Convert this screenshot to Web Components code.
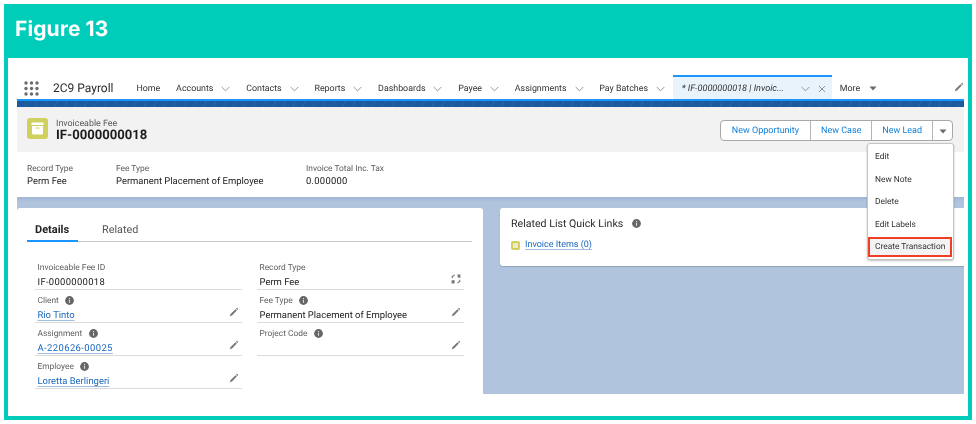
<!DOCTYPE html>
<html lang="en"><head><meta charset="utf-8"><title>Figure 13</title>
<style>
html,body{margin:0;background:#fff}
body{font-family:Roboto,"Liberation Sans",Arial,sans-serif;color:#1c1c1c;width:976px;height:424px;overflow:hidden;text-rendering:geometricPrecision}
</style></head><body>
<fig-frame title-text="Figure 13">
  <sf-nav>
    <nav-item>Home</nav-item>
    <nav-item menu>Accounts</nav-item>
    <nav-item menu>Contacts</nav-item>
    <nav-item menu>Reports</nav-item>
    <nav-item menu>Dashboards</nav-item>
    <nav-item menu>Payee</nav-item>
    <nav-item menu>Assignments</nav-item>
    <nav-item menu>Pay Batches</nav-item>
    <nav-tab>* IF-0000000018 | Invoic...</nav-tab>
    <nav-item caret>More</nav-item>
  </sf-nav>
  <record-header></record-header>
  <record-highlights>
    <hl-item style="width:89px" label="Record Type">Perm Fee</hl-item>
    <hl-item style="width:190px" label="Fee Type">Permanent Placement of Employee</hl-item>
    <hl-item style="--ls:.25px" label="Invoice Total Inc. Tax">0.000000</hl-item>
  </record-highlights>
  <record-body>
    <details-card slot="left">
      <rec-field slot="a" style="--ls:.32px" label="Invoiceable Fee ID">IF-0000000018</rec-field>
      <rec-field slot="a" label="Client" info edit link>Rio Tinto</rec-field>
      <rec-field slot="a" style="--ls:.4px" label="Assignment" info edit link>A-220626-00025</rec-field>
      <rec-field slot="a" label="Employee" info edit link>Loretta Berlingeri</rec-field>
      <rec-field slot="b" label="Record Type" swap>Perm Fee</rec-field>
      <rec-field slot="b" label="Fee Type" info edit>Permanent Placement of Employee</rec-field>
      <rec-field slot="b" label="Project Code" info edit></rec-field>
    </details-card>
    <quick-links slot="right"></quick-links>
  </record-body>
  <action-menu></action-menu>
</fig-frame>
<script>
const ICONS={
 chev:'<svg width="9" height="6" viewBox="0 0 9 6"><path d="M.7 1l3.8 3.8L8.3 1" fill="none" stroke="#7a7a7a" stroke-width=".8"/></svg>',
 caret:'<svg width="8" height="5" viewBox="0 0 8 5"><path d="M.5.4h7L4 4.6z" fill="#6b6b6b"/></svg>',
 close:'<svg width="8" height="8" viewBox="0 0 8 8"><path d="M1 1l6 6M7 1L1 7" stroke="#7a7a7a" stroke-width=".8"/></svg>',
 pencil:'<svg width="10" height="10" viewBox="0 0 10 10"><path d="M8 .8l1.3 1.3-1 1L7 1.8zM6.5 2.3l1.3 1.3-4.8 4.8-2.2.8.8-2.1z" fill="#777"/></svg>',
 info:'<svg width="9" height="9" viewBox="0 0 9 9"><circle cx="4.5" cy="4.5" r="4.4" fill="#666"/><path d="M4.5 2.1v.9M4.5 3.8v3" stroke="#ddd" stroke-width="1.1"/></svg>',
 swap:'<svg width="10" height="10" viewBox="0 0 10 10"><path d="M6.2.6h3.2v3.2H7zM.6 6.2h3.2L3.4 9.4H.6z" fill="#777"/><path d="M1.2 4.2V2.6L3.6 1M8.8 5.8v1.6L6.4 9" fill="none" stroke="#777" stroke-width="1.1"/></svg>',
 box:'<svg width="13" height="13" viewBox="0 0 13 13"><path d="M.4 1.4q0-.9.9-.9h10.4q.9 0 .9.9v1.6H.4z" fill="#fff"/><path d="M1 4h11v7.4q0 1-1 1H2q-1 0-1-1z" fill="#fff"/><rect x="4.4" y="5.4" width="4.2" height="1.2" rx=".5" fill="#cfd05d"/></svg>',
 grid:'<svg width="15" height="15" viewBox="0 0 15 15" fill="#6b6b6b">'+[2,7.5,13].flatMap(y=>[2,7.5,13].map(x=>`<circle cx="${x}" cy="${y}" r="1.7"/>`)).join('')+'</svg>'
};
function def(name,css,html){
  customElements.define(name,class extends HTMLElement{
    constructor(){super();const r=this.attachShadow({mode:'open'});
      r.innerHTML=`<style>${css}</style>`+(typeof html==='function'?html(this):html);}
  });
}
def('fig-frame',`
 :host{display:block;position:relative;margin:4px;height:416px;background:#00ccba;box-sizing:border-box;padding:0 4px 4px;filter:blur(.4px)}
 .t{height:54px;box-sizing:border-box;padding-top:13px;padding-left:7px;color:#fff;font:700 21px/26px Inter,"Open Sans",sans-serif;letter-spacing:.1px}
 .w{background:#fff;height:358px;box-sizing:border-box;padding:17px 4px 22px 9px;display:flex;flex-direction:column}
`,h=>`<div class="t">${h.getAttribute('title-text')}</div><div class="w"><slot></slot></div>`);

def('sf-nav',`
 :host{display:block;height:32px;flex:none;position:relative}
 .r{display:flex;align-items:stretch;height:24px;padding-left:7px;background:#fff;box-sizing:border-box}
 .g{display:flex;align-items:center;width:15px;margin-right:14px;padding-top:2px}
 .n{font-size:12px;width:83.5px;flex:none;color:#2b2b2b;display:flex;align-items:center;padding-top:1px}
 .i{display:flex;flex:1}
 .p{display:flex;align-items:center;margin-left:auto}
 .s{height:8px;border-top:2px solid #1b96ff;box-sizing:border-box;background:
   repeating-linear-gradient(115deg,rgba(255,255,255,.05) 0 1px,transparent 1px 9px),#1c5a9d}
`,`<div class="r"><span class="g">${ICONS.grid}</span><span class="n">2C9 Payroll</span><div class="i"><slot></slot></div><span class="p">${ICONS.pencil}</span></div><div class="s"></div>`);

def('nav-item',`
 :host{display:flex;align-items:center;font-size:8.85px;color:#333;padding-top:3px;margin-right:15.8px}
 svg{margin-left:8px}
 :host([caret]) svg{margin-left:9px}
`,h=>`<slot></slot>${h.hasAttribute('menu')?ICONS.chev:h.hasAttribute('caret')?ICONS.caret:''}`);

def('nav-tab',`
 :host{display:flex;align-items:center;width:159px;flex:none;box-sizing:border-box;margin:0 8px 0 -8px;padding:2px 6px 0 9px;background:#e8f3fc;border-top:2px solid #1b96ff;font-size:9.1px;font-style:italic;color:#333;white-space:nowrap}
 .a{margin-left:auto;display:flex;align-items:center;gap:8px;font-style:normal}
`,`<slot></slot><span class="a">${ICONS.chev}${ICONS.close}</span>`);

def('record-header',`
 :host{display:flex;align-items:flex-start;height:45px;flex:none;background:#f2f2f2;box-sizing:border-box;padding:11px 11px 0 10px;position:relative}
 .ic{width:21px;height:21px;border-radius:3px;background:#cfd05d;display:flex;align-items:center;justify-content:center;flex:none;margin-right:8px}
 .tx{padding-top:1px}
 .o{font-size:8.9px;line-height:10px;color:#585858}
 .v{font-size:13.1px;line-height:13px;font-weight:700;color:#1c1c1c}
 .b{margin-left:auto;margin-top:2px;display:flex;height:21px;width:233.5px;border:1px solid #a8a8a8;border-radius:4px;background:#fff;box-sizing:border-box}
 .b span{display:flex;align-items:center;justify-content:center;box-sizing:border-box;color:#0f7fd8;font-size:9px;border-left:1px solid #b5b5b5;padding-top:1px}
 .b span:first-child{border:0}
`,`<span class="ic">${ICONS.box}</span><div class="tx"><div class="o">Invoiceable Fee</div><div class="v">IF-0000000018</div></div>
<div class="b"><span style="width:90px">New Opportunity</span><span style="width:61px">New Case</span><span style="width:61px">New Lead</span><span style="width:20px">${ICONS.caret}</span></div>`);

def('record-highlights',`:host{display:flex;height:45px;flex:none;background:#fff;box-sizing:border-box;padding:10.5px 0 0 10px}`,`<slot></slot>`);
def('hl-item',`
 :host{display:block;font-size:9.45px}
 .l{color:#5a5a5a;line-height:12px;font-size:8.4px}
 .v{color:#222;line-height:13px;letter-spacing:var(--ls,0)}
`,h=>`<div class="l">${h.getAttribute('label')}</div><div class="v"><slot></slot></div>`);

def('record-body',`
 :host{display:flex;flex:1;min-height:0;gap:17px;background:#b0c4de;box-sizing:border-box;padding-top:11px;align-items:flex-start;position:relative;overflow:hidden;
  background-image:linear-gradient(#a2b7d6 0,#b0c4de 5px)}
`,`<slot name="left"></slot><slot name="right"></slot>`);

def('details-card',`
 :host{display:block;width:466px;height:186px;background:#fff;border-radius:3px 3px 0 0;box-sizing:border-box;padding:0 11px 0 10px;flex:none}
 .tabs{display:flex;height:34px;border-bottom:1.5px solid #c9c9c9;box-sizing:border-box;align-items:flex-start;padding-top:10px}
 .d{width:51px;height:24px;box-sizing:border-box;border-bottom:2px solid #1b96ff;padding-left:8px;font-weight:700;font-size:11px;line-height:23px;color:#222}
 .rl{margin-left:24px;color:#555;font-size:10.8px;line-height:23px}
 .g{display:flex;gap:15px;padding:15px 0 0 8px}
 .c{width:207px;display:flex;flex-direction:column}
`,`<div class="tabs"><span class="d">Details</span><span class="rl">Related</span></div><div class="g"><div class="c"><slot name="a"></slot></div><div class="c"><slot name="b"></slot></div></div>`);

def('rec-field',`
 :host{display:block;height:33px;box-sizing:border-box;border-bottom:1px solid #dcdcdc;position:relative;padding:4.5px 0 0 2.5px}
 .l{font-size:8.4px;line-height:12px;color:#5f5f5f;display:flex;align-items:center;gap:6.5px}
 .v{font-size:9.45px;line-height:15px;color:#222;margin-top:1px;height:15px;letter-spacing:var(--ls,0)}
 :host([link]) .v{color:#1a68bd;text-decoration:underline;text-decoration-color:#9fbfe3;text-underline-offset:1.5px}
 .e{position:absolute;right:3px;bottom:5px;display:flex}
`,h=>`<div class="l">${h.getAttribute('label')}${h.hasAttribute('info')?ICONS.info:''}</div><div class="v"><slot></slot></div>${h.hasAttribute('edit')?`<span class="e">${ICONS.pencil}</span>`:h.hasAttribute('swap')?`<span class="e">${ICONS.swap}</span>`:''}`);

def('quick-links',`
 :host{display:block;flex:1;height:58px;background:#fff;border-radius:3px 0 0 3px;box-shadow:0 1px 1px rgba(0,0,0,.18);box-sizing:border-box;padding:9px 0 0 11px}
 .t{font-size:10.6px;line-height:13px;color:#2b2b2b;display:flex;align-items:center;gap:9px}
 .r{display:flex;align-items:center;gap:5px;margin-top:10px;font-size:9px;color:#1a68bd}
 .r i{width:9px;height:9px;box-sizing:border-box;border:2px solid #cfd05d;border-radius:2px;background:#eceacb}
 .r a{text-decoration:underline;text-decoration-color:#9fbfe3;text-underline-offset:1.5px}
`,`<div class="t">Related List Quick Links ${ICONS.info}</div><div class="r"><i></i><a>Invoice Items (0)</a></div>`);

def('action-menu',`
 :host{position:absolute;left:863px;top:139px;width:87px;height:117px;background:#fff;border:1px solid #c4c4c4;border-radius:3px;box-shadow:0 1px 2px rgba(0,0,0,.25);box-sizing:border-box;padding-top:2px;display:block;font-size:8.4px;color:#333}
 div{height:22.5px;line-height:22.5px;padding-left:7px;box-sizing:border-box}
 .h{background:#f3f3f3;outline:2px solid #ef3e23;outline-offset:-2px;width:84px;height:20px;line-height:20px;margin:1px 0 0 0;padding-left:7px}
`,`<div>Edit</div><div>New Note</div><div>Delete</div><div>Edit Labels</div><div class="h">Create Transaction</div>`);
</script>
</body></html>
